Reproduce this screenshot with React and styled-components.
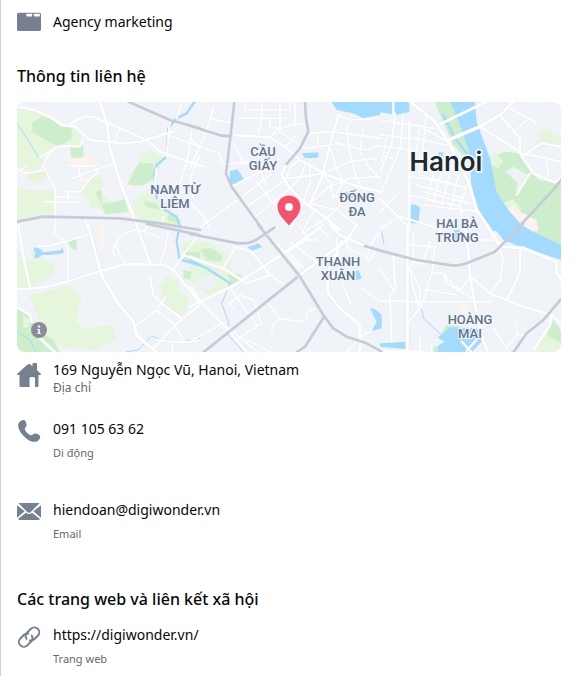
import React from "react";
import styled, { createGlobalStyle } from "styled-components";

const GlobalStyle = createGlobalStyle`
  * { box-sizing: border-box; }
  html, body { margin: 0; background: #fff; }
  body {
    font-family: "Noto Sans", "Open Sans", sans-serif;
    color: #080809;
  }
`;

const Panel = styled.main`
  min-height: 100vh;
  padding: 10px 16px 8px;
  border-left: 1px solid #ced0d6;
  background: #fff;
`;

const Section = styled.section`
  margin-top: ${(p) => p.$top}px;
`;

const Heading = styled.h2`
  margin: 0 0 16px;
  font-size: 16px;
  line-height: 20px;
  font-weight: 500;
`;

const Rows = styled.div`
  display: flex;
  flex-direction: column;
`;

const Row = styled.div`
  display: flex;
  align-items: ${(p) => (p.$center ? "center" : "flex-start")};
  gap: 12px;
  margin-top: ${(p) => p.$top || 0}px;
`;

const Icon = styled.svg`
  flex: none;
  width: 24px;
  height: 24px;
  margin-top: ${(p) => (p.$low ? 3 : 0)}px;
  fill: #758090;
`;

const Text = styled.div`
  display: flex;
  flex-direction: column;
  gap: ${(p) => (p.$tight ? 0 : 6)}px;
  min-width: 0;
`;

const Value = styled.span`
  font-size: 14px;
  line-height: 20px;
`;

const ValueLink = styled.a`
  font-size: 14px;
  line-height: 20px;
  color: inherit;
  text-decoration: none;
`;

const Caption = styled.span`
  font-size: ${(p) => (p.$large ? 12 : 11)}px;
  line-height: 16px;
  color: #65686c;
`;

const MapFrame = styled.div`
  overflow: hidden;
  position: relative;
  margin-bottom: 8px;
  border-radius: 8px;
  background: #f0f3f7;
`;

const MapDrawing = styled.svg`
  display: block;
  width: 100%;
  height: auto;
`;

const InfoButton = styled.button`
  position: absolute;
  left: 14px;
  bottom: 14px;
  display: grid;
  place-items: center;
  width: 16px;
  height: 16px;
  padding: 0;
  border: 0;
  border-radius: 50%;
  background: #8a8d96;
`;

const District = styled.text`
  font: 500 13px Roboto, sans-serif;
  fill: #62748a;
  stroke: #f4f7fa;
  stroke-width: 2px;
  paint-order: stroke;
  text-anchor: middle;
`;

const City = styled.text`
  font: 600 26px Inter, sans-serif;
  fill: #1c2b33;
  stroke: #f7fafc;
  stroke-width: 3px;
  paint-order: stroke;
  text-anchor: middle;
`;

/* Map geometry, kept as six sheets drawn at three units per map pixel. */
const sheets = [
  {
    x: -7, y: -7,
    light: "M22 35L50 38 100 55 130 70 160 95 190 100 215 125 215 150 160 150 130 165 110 190 95 205 80 230 50 228 22 215ZM50 240L105 225 110 245 75 264 50 250ZM22 278L60 285 130 285 140 350 22 372ZM210 285L240 255 265 240 280 260 275 290 300 320 345 315 350 350 240 340 235 310ZM395 175L420 167 455 185 450 220 400 270 360 265 355 240 385 210ZM370 315L420 285 440 310 515 375 515 400 400 378 370 355Z",
    green: "M65 85L95 65 130 75 160 92 185 100 185 130 150 155 125 145 90 125 65 110ZM180 155L220 150 220 190 185 192ZM385 205L430 205 435 250 400 270 350 272ZM255 290L275 285 275 325 300 325 345 312 355 350 285 358 275 330ZM400 320L440 325 450 345 410 335ZM480 350L510 375 510 390 470 375Z",
    sand: "M165 160L180 190 250 182 250 210 200 212 170 190ZM300 250L330 245 350 268 385 274 340 278Z",
    stream: "M552 22L530 55 500 70 475 100 470 185 440 210 432 240 440 310M465 345L500 365 512 398",
    brook: "M22 85L85 185",
    minor: "M330 100L312 140M218 130L210 155 150 152 90 187M140 155L110 185 100 215 135 280 137 400M22 230L50 212M22 222L45 235 105 225M185 250L315 205M175 210L205 215 250 211 265 230 235 258 212 250 205 215M235 258L210 290 173 290 173 320M137 305L205 305M103 320L207 322M225 375L235 405M455 388L460 365M480 122L570 155M545 105L535 180 500 300M570 180L540 250 550 310M515 22L500 70M480 75L470 185M440 220L430 300",
    major: "M22 35L75 45 120 65 155 90 195 95 240 135 340 145 390 140 490 110M180 85L225 65 250 65 410 135 450 170 570 212",
    wide: "M270 22L292 90 300 160 330 260 380 390",
    grey: "M355 20L480 75 570 100M22 380L100 365 200 367 330 370 450 385 570 405",
  },
  {
    x: 173, y: -7,
    water: "M425 20L570 20 570 60 520 70 490 55 440 45ZM120 228L142 223 162 252 140 270 120 265ZM335 175L385 172 385 188 345 190ZM460 292L485 290 490 310 465 312Z",
    stream: "M15 20L0 40",
    minor: "M70 40L55 90 40 130 0 220M70 40L62 70 125 85M0 130L30 155 90 175 95 205 125 208M0 200L45 215M165 20L165 45M145 70L290 70M165 45L300 45M300 20L300 45M315 20L315 90M215 20L215 70 205 115M240 75L240 98 270 100M270 110L345 160M240 128L260 105 320 85 345 88M320 120L285 155M355 113L385 115 385 155M345 160L420 150 440 145 530 165 570 150M385 112L430 110 570 130M470 90L480 180 500 250 550 330M520 100L510 170 540 220 570 250M445 60L480 75 560 70M330 195L300 215 290 250M345 205L335 245 300 280M360 215L362 260 340 320M395 235L420 260 430 310M400 235L480 200 560 190M290 250L340 245 400 235M360 325L410 280 480 250 570 245M125 275L200 235 270 190M150 310L240 240M165 340L285 255M190 370L300 280M200 260L285 370M130 205L200 205 230 270M20 405L120 330 150 310M0 320L45 370 60 400M130 140L155 195 240 230M340 320L300 405M375 340L340 405M410 370L350 405M410 370L450 330 440 300M360 325L440 345 500 390M420 160L440 220 460 260 430 310",
    major: "M270 20L270 110M135 120L240 128 285 155 330 195 400 235 490 270 570 290M445 60L420 150 395 250 360 325M410 370L450 405",
    wide: "M290 207L275 240 300 280 340 320 410 370 440 405",
    grey: "M133 20L122 120 108 235 125 275 215 400M0 92L95 122 122 124M345 20L348 70 355 110 330 160 290 207",
  },
  {
    x: 363, y: -7,
    light: "M460 165L490 100 543 125 543 145 500 155Z",
    green: "M165 20L215 20 255 120 270 170 270 205 220 150 180 60ZM325 190L375 170 415 175 445 210 475 255 543 265 543 408 470 408 430 360 400 330 375 345 350 290 335 230Z",
    lightTop: "M325 185L350 178 370 200 355 220 335 210ZM370 325L400 312 425 345 400 355Z",
    bare: "M375 230L400 215 445 240 410 295 410 260Z",
    sand: "M375 345L400 330 420 350 470 375 475 408 415 408Z",
    water: "M210 20L285 20 290 80 330 190 350 290 385 345 420 385 440 408 325 408 295 345 275 290 270 180 240 90ZM0 20L88 20 88 50 50 60 0 52ZM175 172L190 172 190 195 175 192ZM90 330L105 328 120 338 115 385 90 385Z",
    stream: "M190 60L225 130 265 180",
    minor: "M0 75L165 100M0 120L90 130M0 155L90 165M45 55L35 150 0 230M70 60L60 160 0 300M20 130L5 200M90 245L215 265M90 300L240 335M120 90L110 170M140 60L120 230M110 270L250 310M120 240L260 280M170 200L140 320M190 210L160 325M215 210L185 330M235 240L210 350M130 330L290 350M130 290L270 325M0 310L60 370 90 400M0 350L50 300M0 400L60 365 160 395M265 260L240 330 250 405M130 100L205 140M100 130L200 150M0 180L40 190M390 40L445 70 400 115M445 70L470 85M500 195L505 245M450 235L410 300M40 20L40 60",
    major: "M88 80L88 405M175 90L320 20M300 95L420 170M360 60L385 90 420 130 420 175 475 185 543 200M420 175L460 235 525 262 543 250M425 185L485 145 543 155",
    wide: "M90 20L160 75 205 140 240 210 265 260 290 345 330 405M205 135L300 95 360 60 400 20",
    grey: "M545 253L515 290 405 408",
  },
  {
    x: -7, y: 123,
    light: "M22 75L40 100 70 105 130 110 135 140 100 170 60 185 22 190ZM60 75L100 70 100 105 70 105ZM55 210L150 190 180 178 215 220 205 250 200 290 220 310 310 300 320 345 260 375 160 368 120 345 90 300 70 240ZM450 185L470 155 510 165 505 205 535 215 530 260 510 280 460 230ZM520 50L570 50 570 110 510 100Z",
    green: "M20 245L60 270 75 310 130 345 150 382 20 382ZM170 45L200 42 200 75 185 70ZM525 80L570 80 570 110 520 110ZM520 135L545 140 540 165 520 160Z",
    lightTop: "M40 270L60 285 55 310 40 305Z",
    sand: "M265 0L285 0 282 70 265 75ZM478 50L500 55 500 75 478 75Z",
    water: "M75 65L90 72 100 82 152 76 158 68 162 84 120 90 95 90 85 98 72 98 76 84 70 76Z",
    stream: "M505 22L500 50 508 100M515 105L570 122",
    brook: "M20 320L60 345 78 382M350 380L385 375 425 332 460 350 520 350 570 340",
    minor: "M135 0L133 25 165 50 235 28M80 65L120 62 165 50 175 80 175 168M345 115L318 65 325 35 370 15 400 18 420 0M318 55L310 75 316 100M400 18L450 38M475 22L465 70 450 115M570 25L520 90 490 135M520 90L570 110M465 218L440 255 375 305M440 255L490 295 520 345M570 240L495 300 430 370M440 345L490 352 550 350 570 345M490 352L485 382",
    major: "M25 0L45 120 60 185M380 0L420 115M22 193L100 188 180 168 270 138 350 117 465 120 490 135 570 235M420 155L430 210 460 240 515 280M20 245L60 270 65 290M90 340L135 382",
    wide: "M235 0L255 80 275 150 320 230 370 290 380 330 440 382",
    grey: "M410 -4L450 5 570 30",
  },
  {
    x: 173, y: 123,
    light: "M0 45L60 55 120 90 125 130 155 155 120 180 60 215 0 170Z",
    green: "M30 75L60 68 95 90 95 110 50 105ZM115 150L155 148 150 170 120 180Z",
    bare: "M20 160L60 148 85 175 60 195 20 185Z",
    water: "M172 67L205 55 217 65 185 78ZM495 140L505 135 515 160 500 167ZM540 250L555 252 575 270 575 310 545 318 560 290Z",
    stream: "M0 105L50 130 120 175",
    brook: "M120 175L95 235 115 290 115 330 160 380",
    minor: "M135 70L95 135M240 150L285 180M235 235L270 280 245 305 247 325M270 280L330 290 350 285 350 265 375 250M130 250L118 235 150 210 190 225 215 295M120 190L200 300M215 295L140 345M0 350L105 290M110 305L200 378M170 345L240 380M325 0L355 45 385 45M290 75L340 130M300 50L380 110M330 130L260 55M440 40L450 150 480 235M515 190L570 230M470 45L475 75 520 90 540 105 555 80M530 105L540 60 570 20M505 345L470 380M545 318L510 335M380 0L420 40M350 45L260 100",
    major: "M0 245L125 185 235 115 360 30 400 0M0 95L65 120 100 130 170 175 240 150 185 80 130 65M0 185L45 245 110 310 170 382",
    wide: "M320 158L470 45 500 0M420 0L450 30 525 63M455 50L410 150 415 205 450 250 510 300 510 382",
    grey: "M0 27L130 52Q175 62 205 40L253 8M205 0L330 155 400 270 430 310 470 335 530 355 575 380M40 382L320 158M402 275L345 365 320 382M525 63L572 77",
  },
  {
    x: 363, y: 123,
    light: "M465 355L510 290 543 330 543 382 475 382Z",
    green: "M425 0L545 0 545 60 490 40 460 18ZM180 330L200 300 240 303 190 342ZM160 365L175 362 172 382 160 382ZM500 330L520 285 545 320 545 355Z",
    sand: "M230 240L262 235 262 270 240 265ZM430 0L475 0 460 18Z",
    water: "M335 0L425 0 460 20 545 60 545 105 420 65 370 45ZM173 338L210 307 290 310 310 345 275 382 172 382 175 360 195 350ZM0 270L5 290 0 300ZM0 355L80 350 80 372 0 365ZM222 15L242 15 235 45 222 45Z",
    brook: "M120 220L130 280 180 325M90 160L100 175M5 20L12 55",
    minor: "M345 40L370 100 360 165 335 200M85 230L335 230M135 193L230 210M155 145L190 145 225 185 245 193 270 155M190 145L200 175 275 220M100 22L100 110 90 130 120 190 120 240M90 130L95 170 115 240M85 60L165 65 155 145 125 245 85 290M105 110L125 120 150 50M45 180L50 190 30 210 35 350M0 130L40 195M0 228L80 228M340 310L380 370 410 330 410 295M410 330L430 330M120 340L120 382M155 355L155 382M265 45L340 45M310 320L260 378M245 350L275 382M180 0L180 60",
    major: "M40 95L45 180M420 70L420 140 382 225M272 155L330 205 430 245 510 268M545 300L515 270 510 300 460 375M0 378L130 380",
    wide: "M82 0L82 382M255 0L265 80 270 150 285 240 310 350 325 382M320 0L350 45 370 65 430 70 530 110 530 145 545 165",
    grey: "M0 77L110 105 220 122Q240 122 260 115L345 80 430 -4M545 220L490 285 440 325 400 382",
  },
];

const layers = [
  { key: "light", fill: "#e5f6dd" },
  { key: "green", fill: "#cdeecb" },
  { key: "lightTop", fill: "#e5f6dd" },
  { key: "bare", fill: "#eef2f5" },
  { key: "sand", fill: "#fcf3ee" },
  { key: "water", fill: "#a3daff" },
  { key: "stream", stroke: "#a3daff", width: 7 },
  { key: "brook", stroke: "#a3daff", width: 3 },
  { key: "minor", stroke: "#e9edf2", width: 7 },
  { key: "major", stroke: "#e6eaf0", width: 9 },
  { key: "wide", stroke: "#e2e7ed", width: 12 },
  { key: "minor", stroke: "#ffffff", width: 5 },
  { key: "major", stroke: "#ffffff", width: 7 },
  { key: "wide", stroke: "#ffffff", width: 9 },
  { key: "grey", stroke: "#c5ccd5", width: 8 },
];

const districts = [
  [246, 54, "CẦU"], [246, 68, "GIẤY"],
  [158, 92, "NAM TỪ"], [158, 106, "LIÊM"],
  [340, 100, "ĐỐNG"], [340, 114, "ĐA"],
  [440, 126, "HAI BÀ"], [440, 140, "TRƯNG"],
  [321, 164, "THANH"], [321, 178, "XUÂN"],
  [453, 222, "HOÀNG"], [453, 236, "MAI"],
];

function LocationMap() {
  return (
    <MapFrame>
      <MapDrawing viewBox="0 0 544 250" role="img" aria-label="Hanoi">
        {layers.map((layer, i) => (
          <g
            key={i}
            fill={layer.fill || "none"}
            stroke={layer.stroke || "none"}
            strokeWidth={layer.width}
            strokeLinejoin="round"
            strokeLinecap="round"
          >
            {sheets.map((s) =>
              s[layer.key] ? (
                <path
                  key={`${s.x},${s.y}`}
                  transform={`translate(${s.x} ${s.y}) scale(0.33333)`}
                  d={s[layer.key]}
                />
              ) : null
            )}
          </g>
        ))}
        {districts.map(([x, y, name]) => (
          <District key={name} x={x} y={y}>{name}</District>
        ))}
        <City x="429" y="69">Hanoi</City>
        <path
          fill="#f5536b"
          d="M272 93.500c-6.500 0-11.500 5-11.500 11.300 0 8 7.500 13.500 11.500 18.700 4-5.200 11.500-10.700 11.500-18.700 0-6.300-5-11.300-11.500-11.300Z"
        />
        <circle cx="272" cy="105" r="4" fill="#fff" />
      </MapDrawing>
      <InfoButton type="button" aria-label="Thông tin bản đồ">
        <svg width="6" height="10" viewBox="0 0 6 10" fill="#e6e9ee" aria-hidden="true">
          <circle cx="3" cy="1.500" r="1.300" />
          <path d="M1 4h3v4h1v1H1V8h1V5H1Z" />
        </svg>
      </InfoButton>
    </MapFrame>
  );
}

const FolderIcon = () => (
  <Icon viewBox="0 0 24 24" aria-hidden="true">
    <path
      fillRule="evenodd"
      d="M1.500 2.700H22.500Q24 2.700 24 4.200V19.500Q24 21 22.500 21H1.500Q0 21 0 19.500V4.200Q0 2.700 1.500 2.700ZM9.300 3.700V5.400Q9.300 6.600 10.500 6.600H14Q15.200 6.600 15.200 5.400V3.700ZM16.800 3.700V5.400Q16.800 6.600 18 6.600H21.700Q22.900 6.600 22.900 5.400V3.700Z"
    />
  </Icon>
);

const HomeIcon = () => (
  <Icon $low viewBox="0 0 24 24" aria-hidden="true">
    <path d="M0 11 10.300 1.700Q12 .3 13.700 1.700L15.500 3.300V1Q15.500 0 16.500 0H19Q20 0 20 1V7.200L24 11Q24.200 12 23.200 12H21.500V22.500Q21.500 24 20 24H18V15.500Q18 14 16.500 14H14Q12.500 14 12.500 15.500V24H4Q2.500 24 2.500 22.500V12H.8Q-.2 12 0 11Z" />
  </Icon>
);

const PhoneIcon = () => (
  <Icon viewBox="0 0 24 24" aria-hidden="true">
    <path d="M2.200 3.400C3.500 1.500 6.500.4 7.800 1.600 9 2.800 9.800 5 9.500 6.800 9.300 8 7.700 8.700 7.800 10c.2 2.300 4.200 6.100 6.400 6.300 1.300.1 1.900-1.500 3.100-1.800 1.800-.4 4.300.7 5.400 1.900 1.300 1.400-.1 4.300-2 5.600-2.200 1.500-6.700 1.200-11-2.300C4.800 15.900 1.600 11 1.200 7.300 1 5.700 1.300 4.500 2.200 3.400Z" />
  </Icon>
);

const MailIcon = () => (
  <Icon viewBox="0 0 24 24" aria-hidden="true">
    <path d="M1.500 3.300Q2 3 2.800 3H21.200Q22 3 22.500 3.300L13.500 12.200Q12 13.500 10.500 12.200ZM0 5.300 7.700 11.300 0 17.800ZM24 5.300V17.800L16.300 11.300ZM9 12.700Q12 15.500 15 12.700L23 19Q22.500 20 21 20H3Q1.500 20 1 19Z" />
  </Icon>
);

const LinkIcon = () => (
  <Icon viewBox="0 0 24 24" aria-hidden="true">
    <g fill="none" stroke="#758090" strokeWidth="2" strokeLinecap="round">
      <path d="M9.500 13.800a5 5 0 0 1 .7-6.300l3.700-3.700a4.900 4.900 0 0 1 6.900 0 4.900 4.900 0 0 1 0 6.900l-3.700 3.600a5 5 0 0 1-4.200 1.300" />
      <path d="M14.700 10.500a5 5 0 0 1-.8 6.200l-3.600 3.700a4.900 4.900 0 0 1-6.900 0 4.900 4.900 0 0 1 0-6.900l3.600-3.700a5 5 0 0 1 4.200-1.300" />
    </g>
  </Icon>
);

export default function App() {
  return (
    <>
      <GlobalStyle />
      <Panel>
        <Row $center>
          <FolderIcon />
          <Value>Agency marketing</Value>
        </Row>

        <Section $top={32}>
          <Heading>Thông tin liên hệ</Heading>
          <LocationMap />
          <Rows>
            <Row>
              <HomeIcon />
              <Text $tight>
                <Value>169 Nguyễn Ngọc Vũ, Hanoi, Vietnam</Value>
                <Caption $large>Địa chỉ</Caption>
              </Text>
            </Row>
            <Row $top={23}>
              <PhoneIcon />
              <Text>
                <Value>091 105 63 62</Value>
                <Caption>Di động</Caption>
              </Text>
            </Row>
            <Row $top={39}>
              <MailIcon />
              <Text>
                <Value>hiendoan@digiwonder.vn</Value>
                <Caption>Email</Caption>
              </Text>
            </Row>
          </Rows>
        </Section>

        <Section $top={47}>
          <Heading>Các trang web và liên kết xã hội</Heading>
          <Row>
            <LinkIcon />
            <Text>
              <ValueLink href="https://digiwonder.vn/">https://digiwonder.vn/</ValueLink>
              <Caption>Trang web</Caption>
            </Text>
          </Row>
        </Section>
      </Panel>
    </>
  );
}
